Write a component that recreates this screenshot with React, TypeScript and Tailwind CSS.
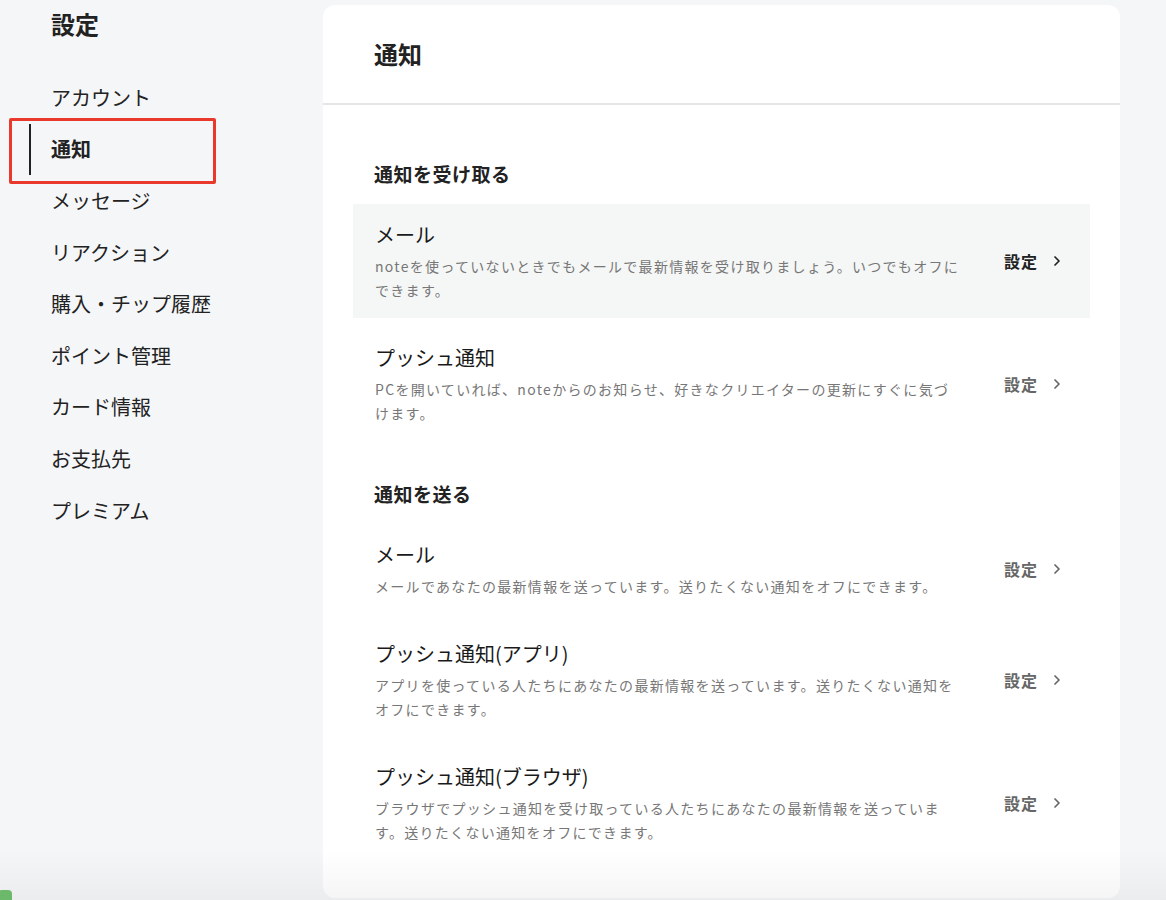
import React from 'react';
import { ChevronRight } from 'lucide-react';

const font = { fontFamily: '"Noto Sans CJK JP", "Noto Sans", sans-serif' };

const navItems = [
  'アカウント',
  '通知',
  'メッセージ',
  'リアクション',
  '購入・チップ履歴',
  'ポイント管理',
  'カード情報',
  'お支払先',
  'プレミアム',
];

const sections = [
  {
    title: '通知を受け取る',
    rows: [
      { title: 'メール', desc: 'noteを使っていないときでもメールで最新情報を受け取りましょう。いつでもオフにできます。', active: true },
      { title: 'プッシュ通知', desc: 'PCを開いていれば、noteからのお知らせ、好きなクリエイターの更新にすぐに気づけます。' },
    ],
  },
  {
    title: '通知を送る',
    rows: [
      { title: 'メール', desc: 'メールであなたの最新情報を送っています。送りたくない通知をオフにできます。' },
      { title: 'プッシュ通知(アプリ)', desc: 'アプリを使っている人たちにあなたの最新情報を送っています。送りたくない通知をオフにできます。' },
      { title: 'プッシュ通知(ブラウザ)', desc: 'ブラウザでプッシュ通知を受け取っている人たちにあなたの最新情報を送っています。送りたくない通知をオフにできます。' },
    ],
  },
];

function Row({ title, desc, active }: { title: string; desc: string; active?: boolean }) {
  return (
    <div className={`flex items-center justify-between pl-[22px] pr-[25px] py-4 ${active ? 'bg-[#f5f6f6]' : ''}`}>
      <div className="w-[586px]">
        <div className="text-[20px] leading-[30px] text-[#1a1a1a]">{title}</div>
        <p className="mt-1 text-[14px] leading-6 tracking-[1.3px] text-[#777]">{desc}</p>
      </div>
      <div className={`flex items-center gap-[11px] text-[16px] font-bold tracking-[1px] ${active ? 'text-[#222]' : 'text-[#666]'}`}>
        <span>設定</span>
        <ChevronRight className="w-4 h-4" strokeWidth={2.6} />
      </div>
    </div>
  );
}

export default function App() {
  return (
    <div className="relative flex h-[900px] overflow-hidden bg-[#f5f6f8]" style={font}>
      {/* sidebar */}
      <aside className="w-[323px] shrink-0">
        <h1 className="pl-[51px] pt-[8px] text-[24px] leading-8 font-bold text-[#222]">設定</h1>
        <nav className="mt-[32px]">
          {navItems.map((item) => {
            const isActive = item === '通知';
            return (
              <div key={item} className="relative h-[51.6px] flex items-center">
                {isActive ? (
                  <>
                    <div className="ml-[29px] h-full border-l-2 border-[#222] pl-[20px] flex items-center text-[20px] font-bold text-[#222]">
                      {item}
                    </div>
                    <div className="absolute left-[9px] top-[-6px] w-[207px] h-[66px] border-[3px] border-[#e8392c] rounded-[2px] pointer-events-none" />
                  </>
                ) : (
                  <div className="pl-[51px] text-[20px] text-[#222]">{item}</div>
                )}
              </div>
            );
          })}
        </nav>
      </aside>

      {/* content card */}
      <main className="mt-[5px] w-[797px] h-[893px] shrink-0 rounded-xl bg-white">
        <div className="h-[100px] flex items-center pl-[51px] border-b-2 border-[#e4e5e6]">
          <h2 className="text-[24px] font-bold text-[#222]">通知</h2>
        </div>
        <div className="px-[30px] pt-[56px]">
          {sections.map((section, i) => (
            <section key={section.title} className={i > 0 ? 'mt-[40px]' : ''}>
              <h3 className="pl-[21px] text-[19px] leading-[26px] font-bold tracking-[0.5px] text-[#222]">{section.title}</h3>
              <div className="mt-[17px] flex flex-col gap-[9px]">
                {section.rows.map((row) => (
                  <Row key={row.title + row.desc} {...row} />
                ))}
              </div>
            </section>
          ))}
        </div>
      </main>

      {/* bottom fade */}
      <div className="absolute left-0 right-0 bottom-0 h-[50px] bg-gradient-to-b from-transparent to-black/[0.04] pointer-events-none" />
      <div className="absolute left-[-2px] bottom-[-4px] w-[14px] h-[14px] rounded-[4px] bg-[#6cb96c]" />
    </div>
  );
}
